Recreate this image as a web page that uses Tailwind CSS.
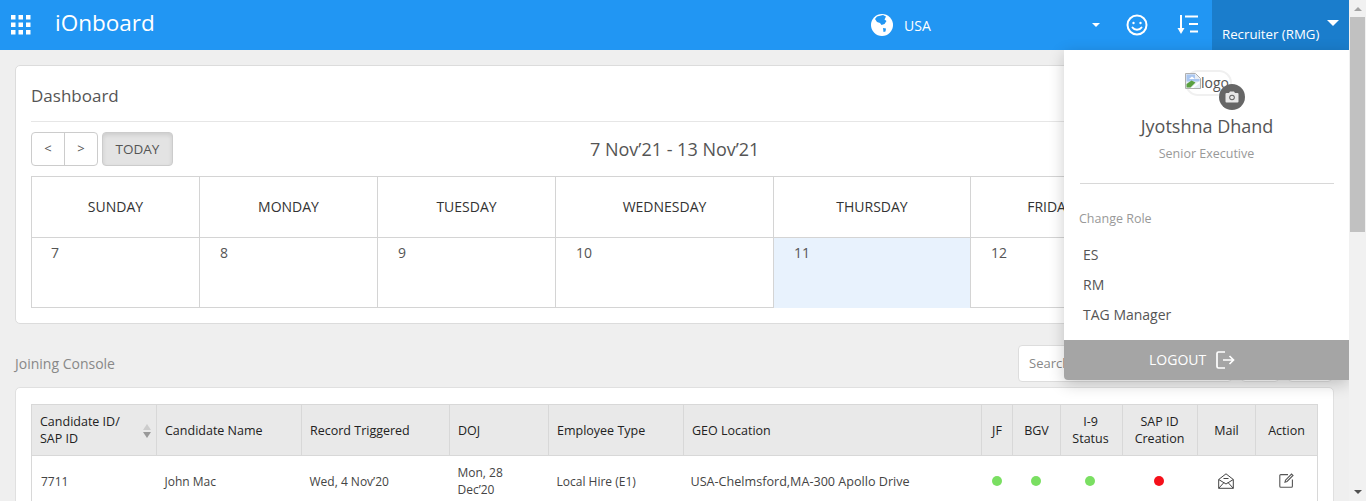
<!DOCTYPE html>
<html lang="en">
<head>
    <meta charset="UTF-8">
    <meta name="viewport" content="width=device-width, initial-scale=1.0">
    <title>iOnboard</title>
    <script src="https://cdn.jsdelivr.net/npm/@tailwindcss/browser@4"></script>
</head>
<body class="h-[501px] overflow-hidden bg-[#efefef] font-['Open_Sans',sans-serif] text-[#555]">
    <div class="flex h-[501px]">
        <div class="relative h-[501px] w-[1349px] shrink-0 overflow-hidden">
            <!-- top bar -->
            <header class="flex h-[50px] items-center bg-[#2196f3] text-white">
                <svg class="ml-[11px] h-[20px] w-[20px]" viewBox="0 0 20 20" fill="#fff">
                    <rect x="0" y="0" width="4.5" height="4.5"/><rect x="7.5" y="0" width="4.5" height="4.5"/><rect x="15" y="0" width="4.5" height="4.5"/>
                    <rect x="0" y="7.5" width="4.5" height="4.5"/><rect x="7.5" y="7.5" width="4.5" height="4.5"/><rect x="15" y="7.5" width="4.5" height="4.5"/>
                    <rect x="0" y="15" width="4.5" height="4.5"/><rect x="7.5" y="15" width="4.5" height="4.5"/><rect x="15" y="15" width="4.5" height="4.5"/>
                </svg>
                <div class="ml-[24px] w-[100px] pb-[3px] text-[22.500px] leading-none">iOnboard</div>
                <svg class="ml-[716px] h-[22px] w-[22px]" viewBox="0 0 22 22">
                    <circle cx="11" cy="11" r="11" fill="#fff"/>
                    <path d="M6 2.500L12 1l3 1.500-1.500 3 2 1.500-2 3-3 1-1.500-2-3-1-2-3zM12 14l3 .5-.5 3-2 .5z" fill="#2196f3"/>
                </svg>
                <div class="ml-[11px] w-[28px] text-[14px] font-medium">USA</div>
                <div class="ml-[160px] h-0 w-0 border-x-[4px] border-t-[4px] border-x-transparent border-t-white"></div>
                <svg class="ml-[26px] h-[22px] w-[22px]" viewBox="0 0 22 22" fill="none" stroke="#fff" stroke-width="2">
                    <circle cx="11" cy="11" r="9.500"/>
                    <circle cx="7.500" cy="9" r="1.200" fill="#fff" stroke="none"/><circle cx="14.500" cy="9" r="1.200" fill="#fff" stroke="none"/>
                    <path d="M6.500 13.500c2 3 7 3 9 0" stroke-linecap="round"/>
                </svg>
                <svg class="ml-[29px] h-[20px] w-[22px]" viewBox="0 0 22 20" fill="none" stroke="#fff" stroke-width="2">
                    <path d="M4 0v14"/><path d="M.5 13h7L4 19z" fill="#fff" stroke="none"/><path d="M8 1.500h13M12 9h9M13 16.500h8" />
                </svg>
                <div class="relative ml-[13px] h-[50px] w-[137px] bg-[#1a7dcc] pl-[10px] pt-[25px] text-[13.250px] leading-[18px] whitespace-nowrap">
                    Recruiter (RMG)
                    <div class="absolute left-[115px] top-[20px] h-0 w-0 border-x-[6px] border-t-[6px] border-x-transparent border-t-white"></div>
                </div>
            </header>

            <main class="pl-[15px] pr-[15px]">
                <!-- dashboard calendar -->
                <section class="mt-[15px] h-[259px] rounded-[5px] border border-[#dcdcdc] bg-white px-[15px]">
                    <div class="flex h-[56px] items-center border-b border-[#e6e6e6] pt-[5px] text-[17px] text-[#555]">Dashboard</div>
                    <div class="relative mt-[10px] flex h-[34px] items-center">
                        <div class="flex h-[34px] w-[67px] rounded-[4px] border border-[#ccc] text-[13px] text-[#555]">
                            <div class="flex w-[33px] items-center justify-center border-r border-[#ccc]">&lt;</div>
                            <div class="flex flex-1 items-center justify-center">&gt;</div>
                        </div>
                        <div class="ml-[4px] flex h-[34px] w-[71px] items-center justify-center rounded-[4px] border border-[#ccc] bg-[#e3e3e3] text-[13.500px] text-[#555] shadow-[inset_0_2px_4px_rgba(0,0,0,0.1)]">TODAY</div>
                        <div class="ml-[417px] text-[18px] text-[#555]">7 Nov’21 - 13 Nov’21</div>
                    </div>
                    <div class="mt-[10px] grid h-[132px] w-[1287px] grid-cols-[168px_178px_178px_218px_197px_160px_188px] grid-rows-[61px_70px] border border-[#d4d4d4] text-[14px]">
                        <div class="flex items-center justify-center border-r border-b border-[#d4d4d4] pb-[2px] font-medium text-[#333]">SUNDAY</div>
                        <div class="flex items-center justify-center border-r border-b border-[#d4d4d4] pb-[2px] font-medium text-[#333]">MONDAY</div>
                        <div class="flex items-center justify-center border-r border-b border-[#d4d4d4] pb-[2px] font-medium text-[#333]">TUESDAY</div>
                        <div class="flex items-center justify-center border-r border-b border-[#d4d4d4] pb-[2px] font-medium text-[#333]">WEDNESDAY</div>
                        <div class="flex items-center justify-center border-r border-b border-[#d4d4d4] pb-[2px] font-medium text-[#333]">THURSDAY</div>
                        <div class="flex items-center justify-center border-r border-b border-[#d4d4d4] pb-[2px] font-medium text-[#333]">FRIDAY</div>
                        <div class="flex items-center justify-center border-b border-[#d4d4d4] pb-[2px] font-medium text-[#333]">SATURDAY</div>
                        <div class="border-r border-[#d4d4d4] pl-[19px] pt-[4px]">7</div>
                        <div class="border-r border-[#d4d4d4] pl-[20px] pt-[4px]">8</div>
                        <div class="border-r border-[#d4d4d4] pl-[20px] pt-[4px]">9</div>
                        <div class="border-r border-[#d4d4d4] pl-[20px] pt-[4px]">10</div>
                        <div class="border-r border-[#d4d4d4] bg-[#e8f2fd] pl-[20px] pt-[4px]">11</div>
                        <div class="border-r border-[#d4d4d4] pl-[20px] pt-[4px]">12</div>
                        <div class="pl-[20px] pt-[4px]">13</div>
                    </div>
                </section>

                <!-- joining console -->
                <div class="mt-[21px] flex h-[37px] items-center">
                    <div class="text-[14px] text-[#888]">Joining Console</div>
                    <div class="ml-auto mr-[2px] flex h-[37px] gap-[9px]">
                        <div class="flex w-[214px] items-center rounded-[4px] border border-[#ddd] bg-white pl-[10px] text-[13px] text-[#888]">Search</div>
                        <div class="w-[38px] rounded-[4px] border border-[#ddd] bg-white"></div>
                        <div class="w-[44px] rounded-[4px] border border-[#ddd] bg-white"></div>
                    </div>
                </div>

                <section class="mt-[5px] h-[200px] w-[1319px] rounded-[5px] border border-[#e0e0e0] bg-white px-[15px] pt-[16px]">
                    <table class="w-[1287px] table-fixed border-collapse text-[12.500px] text-[#222]">
                        <thead>
                            <tr class="h-[51px] bg-[#e9e9e9] leading-[17px]">
                                <th class="relative w-[125px] border border-[#d8d8d8] pl-[8px] pr-[20px] text-left font-medium">
                                    Candidate ID/ SAP ID
                                    <span class="absolute right-[5px] top-[19px] h-0 w-0 border-x-[4px] border-b-[6px] border-x-transparent border-b-[#ccc]"></span>
                                    <span class="absolute right-[5px] top-[27px] h-0 w-0 border-x-[4px] border-t-[6px] border-x-transparent border-t-[#999]"></span>
                                </th>
                                <th class="w-[145px] border border-[#d8d8d8] pl-[8px] text-left font-medium">Candidate Name</th>
                                <th class="w-[148px] border border-[#d8d8d8] pl-[8px] text-left font-medium">Record Triggered</th>
                                <th class="w-[99px] border border-[#d8d8d8] pl-[8px] text-left font-medium">DOJ</th>
                                <th class="w-[135px] border border-[#d8d8d8] pl-[8px] text-left font-medium">Employee Type</th>
                                <th class="w-[298px] border border-[#d8d8d8] pl-[8px] text-left font-medium">GEO Location</th>
                                <th class="w-[31px] border border-[#d8d8d8] font-medium">JF</th>
                                <th class="w-[48px] border border-[#d8d8d8] font-medium">BGV</th>
                                <th class="w-[62px] border border-[#d8d8d8] pr-[2px] font-medium">I-9<br>Status</th>
                                <th class="w-[75px] border border-[#d8d8d8] pr-[1px] font-medium">SAP ID<br>Creation</th>
                                <th class="w-[58px] border border-[#d8d8d8] font-medium">Mail</th>
                                <th class="border border-[#d8d8d8] font-medium">Action</th>
                            </tr>
                        </thead>
                        <tbody class="text-[12px]">
                            <tr class="h-[50px] border-b border-[#d8d8d8] leading-[17px] text-[#444]">
                                <td class="border-l border-[#d8d8d8] pl-[9px] pt-[2px]">7711</td>
                                <td class="pl-[8px] pt-[2px]">John Mac</td>
                                <td class="pl-[8px] pt-[2px]">Wed, 4 Nov’20</td>
                                <td class="pl-[8px]">Mon, 28<br>Dec’20</td>
                                <td class="pl-[8px] pt-[2px]">Local Hire (E1)</td>
                                <td class="pl-[7px] pt-[2px] text-[12.600px]">USA-Chelmsford,MA-300 Apollo Drive</td>
                                <td><div class="mx-auto h-[10px] w-[10px] rounded-full bg-[#7adf62]"></div></td>
                                <td class="pr-[2px]"><div class="mx-auto h-[10px] w-[10px] rounded-full bg-[#7adf62]"></div></td>
                                <td class="pr-[4px]"><div class="mx-auto h-[10px] w-[10px] rounded-full bg-[#7adf62]"></div></td>
                                <td class="pr-[2px]"><div class="mx-auto h-[10px] w-[10px] rounded-full bg-[#f5101a]"></div></td>
                                <td class="pr-[1px]">
                                    <svg class="mx-auto h-[16px] w-[16px]" viewBox="0 0 16 16" fill="none" stroke="#444" stroke-width="1">
                                        <path d="M.7 6.500L8 .8l7.300 5.700v8.800H.7zM.7 6.500L8 11l7.300-4.500M.7 15.300L6 9.500M15.300 15.300L10 9.500M5.500 5.500h5"/>
                                    </svg>
                                </td>
                                <td class="border-r border-[#d8d8d8]">
                                    <svg class="mx-auto h-[15px] w-[15px]" viewBox="0 0 15 15" fill="none" stroke="#555" stroke-width="1.100">
                                        <path d="M9 1.600H1.800a1 1 0 0 0-1 1v10.600a1 1 0 0 0 1 1h10.600a1 1 0 0 0 1-1V6.500"/><path d="M6 9.200l.5-2L12.500 1l1.500 1.500-6 6z"/>
                                    </svg>
                                </td>
                            </tr>
                        </tbody>
                    </table>
                </section>
            </main>

            <!-- profile dropdown -->
            <div class="absolute left-[1064px] top-[50px] h-[330px] w-[285px] rounded-b-[4px] bg-white shadow-[0_4px_16px_rgba(0,0,0,0.2)]">
                <div class="relative mt-[23px] ml-[121px] h-[26px] w-[47px]">
                    <div class="absolute left-0 top-[-3px] h-[26px] w-[47px] rounded-full border-2 border-[#f0f0f0]"></div>
                    <div class="relative flex items-center text-[14px] leading-[20px] text-[#555]">
                        <svg class="mb-[4px] h-[16px] w-[16px] shrink-0" viewBox="0 0 16 16">
                            <path d="M.5.500h10l5 5v10H.5z" fill="#e8eef6" stroke="#b0b0b0"/>
                            <path d="M1.500 1.500h8.500v4.500h4.500v2.500H1.500z" fill="#a9c6f0"/>
                            <path d="M4 6l3-2.500L10 6z" fill="#fff"/>
                            <path d="M1.500 14.500V11l5-3.500 4 2-5 5z" fill="#5aa040"/>
                            <path d="M6 15l8.500-7v2l-6 5z" fill="#fff"/>
                        </svg>
                        <span class="ml-[0px]">logo</span>
                    </div>
                </div>
                <div class="absolute left-[155px] top-[34px] flex h-[26px] w-[26px] items-center justify-center rounded-full bg-[#666]">
                    <svg class="h-[14px] w-[14px]" viewBox="0 0 14 14" fill="#e8e8e8">
                        <path d="M1.500 3h2.500l1-1.500h4L10 3h2.500a1 1 0 0 1 1 1v7.500a1 1 0 0 1-1 1h-11a1 1 0 0 1-1-1V4a1 1 0 0 1 1-1z"/>
                        <circle cx="7" cy="7.500" r="2.800" fill="#666"/><circle cx="7" cy="7.500" r="1.800" fill="#e8e8e8"/>
                    </svg>
                </div>
                <div class="mt-[14px] pl-[1px] text-center text-[18px] leading-[26px] text-[#555]">Jyotshna Dhand</div>
                <div class="mt-[6px] text-center text-[12.500px] leading-[18px] text-[#999]">Senior Executive</div>
                <div class="ml-[16px] mr-[15px] mt-[20px] border-b border-[#d8d8d8]"></div>
                <div class="ml-[15px] mt-[26px] text-[12.500px] leading-[18px] text-[#999]">Change Role</div>
                <div class="ml-[19px] mt-[12px] text-[14px] leading-[30px] text-[#555]">
                    <div>ES</div>
                    <div>RM</div>
                    <div>TAG Manager</div>
                </div>
                <div class="absolute bottom-0 left-0 flex h-[40px] w-full items-center rounded-bl-[4px] bg-[#a5a5a5] pb-[1px] pl-[85px] text-[14px] font-medium text-white">
                    <span class="pb-[1px]">LOGOUT</span>
                    <svg class="ml-[9px] h-[20px] w-[20px]" viewBox="0 0 20 20" fill="none" stroke="#fff" stroke-width="1.700">
                        <path d="M10 2H3.500A1.500 1.500 0 0 0 2 3.500v13A1.500 1.500 0 0 0 3.500 18H10"/><path d="M8 10h10M14.500 6l4 4-4 4"/>
                    </svg>
                </div>
            </div>
        </div>

        <!-- page scrollbar -->
        <div class="relative w-[17px] shrink-0 bg-[#f1f1f1]">
            <div class="absolute left-[5px] top-[7px] h-0 w-0 border-x-[4px] border-b-[4px] border-x-transparent border-b-[#a3a3a3]"></div>
            <div class="mx-auto mt-[17px] h-[215px] w-[15px] bg-[#c1c1c1]"></div>
            <div class="absolute bottom-[7px] left-[5px] h-0 w-0 border-x-[4px] border-t-[4px] border-x-transparent border-t-[#505050]"></div>
        </div>
    </div>
</body>
</html>
